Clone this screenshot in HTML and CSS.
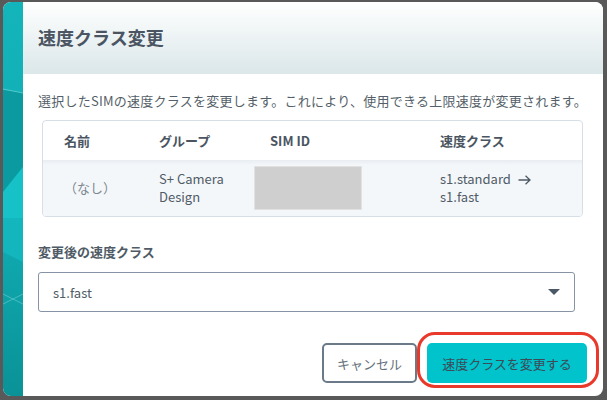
FILE: index.html
```html
<!DOCTYPE html>
<html lang="ja">
<head>
    <meta charset="UTF-8">
    <meta name="viewport" content="width=device-width, initial-scale=1.0">
    <title>速度クラス変更</title>
    <link rel="stylesheet" href="styles.css">
</head>
<body>
    <div class="modal">
        <div class="modal-side">
            <svg width="20" height="394" viewBox="0 0 20 394" preserveAspectRatio="none">
                <defs>
                    <linearGradient id="sideGrad" x1="0" y1="0" x2="0" y2="1">
                        <stop offset="0" stop-color="#13b4ba"/>
                        <stop offset="0.55" stop-color="#10adb3"/>
                        <stop offset="1" stop-color="#0a9297"/>
                    </linearGradient>
                </defs>
                <rect x="0" y="0" width="20" height="394" fill="url(#sideGrad)"/>
                <polygon points="0,88 20,91 20,165 0,190" fill="#0b9aa0"/>
                <polygon points="0,190 20,165 20,216 0,216" fill="#16c1c7"/>
                <polygon points="0,216 20,216 20,260 0,250" fill="#12b6bc"/>
                <line x1="0" y1="87" x2="20" y2="91" stroke="#7fd9dc" stroke-width="0.6"/>
                <line x1="0" y1="292" x2="20" y2="302" stroke="#6fd0d4" stroke-width="0.6"/>
                <line x1="0" y1="302" x2="20" y2="292" stroke="#6fd0d4" stroke-width="0.6"/>
            </svg>
        </div>
        <div class="modal-main">
            <div class="modal-header">
                <h2>速度クラス変更</h2>
            </div>
            <div class="modal-body">
                <p class="desc">選択したSIMの速度クラスを変更します。これにより、使用できる上限速度が変更されます。</p>

                <div class="sim-table">
                    <div class="row head">
                        <div class="cell">名前</div>
                        <div class="cell">グループ</div>
                        <div class="cell">SIM ID</div>
                        <div class="cell">速度クラス</div>
                    </div>
                    <div class="row body-row">
                        <div class="cell muted">（なし）</div>
                        <div class="cell">S+ Camera<br>Design</div>
                        <div class="cell id-cell"><div class="masked"></div></div>
                        <div class="cell">
                            s1.standard
                            <svg class="arrow" width="13" height="10" viewBox="0 0 13 10">
                                <path d="M0.5 5H12M7.5 0.8L12 5L7.5 9.2" fill="none" stroke="#4f5b66" stroke-width="1.3"/>
                            </svg>
                            <br>s1.fast
                        </div>
                    </div>
                </div>

                <label class="field-label">変更後の速度クラス</label>
                <div class="select">
                    <span>s1.fast</span>
                    <span class="caret"></span>
                </div>

                <div class="actions">
                    <button class="btn btn-cancel">キャンセル</button>
                    <button class="btn btn-primary">速度クラスを変更する</button>
                    <div class="highlight"></div>
                </div>
            </div>
        </div>
    </div>
</body>
</html>
```

FILE: styles.css
```css
body {
    margin: 0;
    background: #595959;
    font-family: "Noto Sans CJK JP", "Noto Sans", sans-serif;
    color: #4f5b66;
}
.modal {
    margin: 2px 0 0 3px;
    width: 600px;
    height: 394px;
    border-radius: 8px;
    overflow: hidden;
    background: #fff;
    display: flex;
}
.modal-side {
    width: 20px;
    flex-shrink: 0;
}
.modal-side svg {
    display: block;
}
.modal-main {
    flex: 1;
    display: flex;
    flex-direction: column;
}
.modal-header {
    height: 72px;
    padding-left: 15px;
    display: flex;
    align-items: center;
    background: linear-gradient(#ffffff, #dbe7e9);
}
.modal-header h2 {
    margin: 0 0 2px 0;
    font-size: 18px;
    font-weight: 700;
    color: #4a5462;
}
.modal-body {
    padding: 17px 15px 0 15px;
    position: relative;
}
.desc {
    margin: 0;
    font-size: 13px;
    line-height: 20px;
    letter-spacing: 0.25px;
    color: #555f69;
    white-space: nowrap;
}
.sim-table {
    margin: 9px 0 0 4px;
    width: 539px;
    border: 1px solid #d6dee6;
    border-radius: 4px;
    overflow: hidden;
}
.row {
    display: grid;
    grid-template-columns: 95px 111px 170px 1fr;
    padding-left: 5px;
    font-size: 13px;
}
.row.head {
    height: 39px;
    align-items: center;
    font-weight: 700;
    color: #4a5561;
}
.row.body-row {
    height: 56px;
    align-items: center;
    line-height: 18px;
    background: linear-gradient(#e8edf2, #f4f7fa 5px);
}
.cell {
    padding-left: 16px;
}
.cell.muted {
    color: #7d8791;
}
.cell.id-cell {
    padding-left: 0;
}
.masked {
    width: 108px;
    height: 44px;
    background: #cfcfcf;
    border: 1px solid #e1e1e1;
    box-sizing: border-box;
}
.arrow {
    margin-left: 4px;
    vertical-align: -1px;
}
.field-label {
    display: block;
    margin-top: 25px;
    font-size: 13px;
    font-weight: 700;
    line-height: 20px;
    color: #4f5b66;
}
.select {
    margin-top: 10px;
    width: 537px;
    height: 40px;
    box-sizing: border-box;
    border: 1px solid #8594a4;
    border-radius: 3px;
    padding: 0 14px;
    display: flex;
    align-items: center;
    justify-content: space-between;
    font-size: 13px;
}
.caret {
    width: 0;
    height: 0;
    border-left: 6px solid transparent;
    border-right: 6px solid transparent;
    border-top: 6px solid #4a5868;
}
.actions {
    margin-top: 31px;
    display: flex;
    justify-content: flex-end;
    gap: 10px;
    padding-right: 1px;
    position: relative;
}
.btn {
    height: 40px;
    border-radius: 5px;
    font-family: inherit;
    font-size: 13px;
    cursor: pointer;
}
.btn-cancel {
    width: 95px;
    background: #fff;
    border: 2px solid #6b7a89;
    color: #66717c;
}
.btn-primary {
    width: 160px;
    background: #00c3cb;
    border: none;
    color: #3d4a57;
}
.highlight {
    position: absolute;
    right: -11px;
    top: -11px;
    width: 176px;
    height: 50px;
    border: 3px solid #e8392b;
    border-radius: 18px;
}
```
